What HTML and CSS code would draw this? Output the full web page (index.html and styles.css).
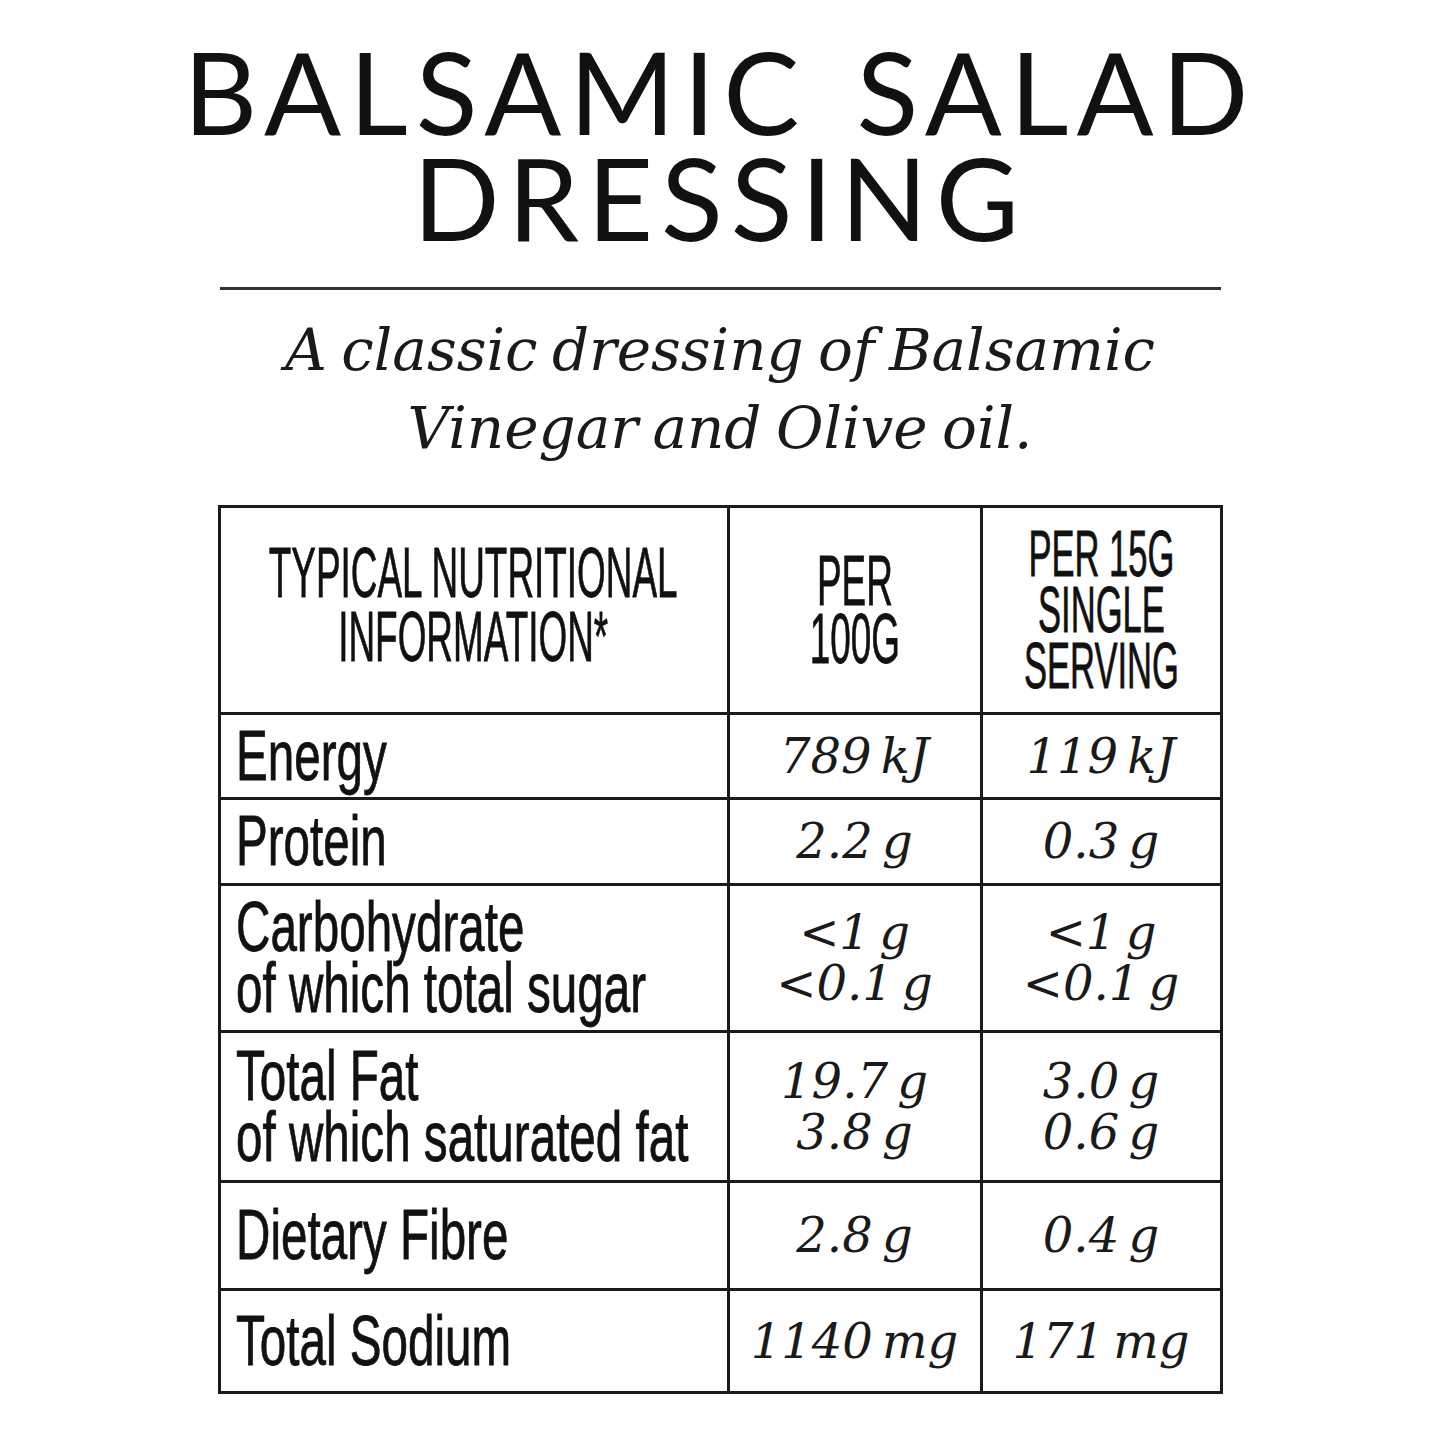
FILE: index.html
```html
<!DOCTYPE html>
<html lang="en">
<head>
<meta charset="utf-8">
<title>Balsamic Salad Dressing</title>
<link rel="stylesheet" href="styles.css">
</head>
<body>
<main class="page">
  <h1 class="title">BALSAMIC SALAD<br>DRESSING</h1>
  <hr class="rule">
  <p class="subtitle">A classic dressing of Balsamic<br>Vinegar and Olive oil.</p>
  <table class="facts">
    <colgroup>
      <col class="c1"><col class="c2"><col class="c3">
    </colgroup>
    <thead>
      <tr class="r-head">
        <th class="h1c"><div class="hc"><span class="cap">TYPICAL NUTRITIONAL<br>INFORMATION*</span></div></th>
        <th class="h2c"><div class="hc"><span class="cap">PER<br>100G</span></div></th>
        <th class="h3c"><div class="hc"><span class="cap">PER 15G<br>SINGLE<br>SERVING</span></div></th>
      </tr>
    </thead>
    <tbody>
      <tr class="r-energy"><td class="lab"><span class="cond">Energy</span></td><td class="val">789 kJ</td><td class="val">119 kJ</td></tr>
      <tr class="r-protein"><td class="lab"><span class="cond">Protein</span></td><td class="val">2.2 g</td><td class="val">0.3 g</td></tr>
      <tr class="r-carb"><td class="lab"><span class="cond">Carbohydrate<br>of which total sugar</span></td><td class="val">&lt;1 g<br>&lt;0.1 g</td><td class="val">&lt;1 g<br>&lt;0.1 g</td></tr>
      <tr class="r-fat"><td class="lab"><span class="cond">Total Fat<br>of which saturated fat</span></td><td class="val">19.7 g<br>3.8 g</td><td class="val">3.0 g<br>0.6 g</td></tr>
      <tr class="r-fibre"><td class="lab"><span class="cond">Dietary Fibre</span></td><td class="val">2.8 g</td><td class="val">0.4 g</td></tr>
      <tr class="r-sodium"><td class="lab"><span class="cond">Total Sodium</span></td><td class="val">1140 mg</td><td class="val">171 mg</td></tr>
    </tbody>
  </table>
</main>
</body>
</html>
```

FILE: styles.css
```css
html, body {
  margin: 0;
  padding: 0;
  background: #ffffff;
  color: #111111;
}

.page {
  width: 1440px;
  display: flex;
  flex-direction: column;
  align-items: center;
  padding-top: 38px;
}

.title {
  margin: 0;
  font-family: "Lato", "Liberation Sans", sans-serif;
  font-weight: 400;
  font-size: 114px;
  line-height: 106px;
  letter-spacing: 8px;
  word-spacing: 12px;
  text-align: center;
  color: #111;
}

.rule {
  width: 1001px;
  height: 3px;
  border: 0;
  background: #333;
  margin: 37px 0 0 0;
}

.subtitle {
  margin: 21px 0 0 0;
  font-family: "DejaVu Serif", "Liberation Serif", serif;
  font-style: italic;
  font-size: 58px;
  line-height: 78px;
  letter-spacing: 0;
  word-spacing: -4px;
  text-align: center;
  color: #1a1a1a;
}

.facts {
  margin-top: 38px;
  width: 1002px;
  border-collapse: collapse;
  table-layout: fixed;
  border: 3px solid #1a1a1a;
}

.c1 { width: 509px; }
.c2 { width: 253px; }
.c3 { width: 240px; }

.facts th,
.facts td {
  border: 3px solid #1a1a1a;
  padding: 0;
  vertical-align: middle;
}

.facts th {
  font-family: "Liberation Sans", "Arial", sans-serif;
  font-weight: 400;
  text-align: center;
  color: #111;
}

.hc {
  display: flex;
  justify-content: center;
  align-items: center;
}

.cap,
.cond {
  display: inline-block;
  white-space: nowrap;
  -webkit-text-stroke: 0.8px #111;
}

.cap {
  flex: none;
  text-align: center;
  transform: scaleX(0.52);
  transform-origin: center center;
}

.cond {
  transform: scaleX(0.68);
  transform-origin: left center;
}

.h1c {
  font-size: 71px;
  line-height: 64px;
  padding-bottom: 10px !important;
}

.h2c {
  font-size: 71px;
  line-height: 58px;
}

.h3c {
  font-size: 64px;
  line-height: 56px;
}

.h3c .cap {
  transform: scaleX(0.54);
}

.r-head { height: 207px; }
.r-energy { height: 85px; }
.r-protein { height: 86px; }
.r-carb { height: 147px; }
.r-fat { height: 150px; }
.r-fibre { height: 108px; }
.r-sodium { height: 103px; }

.lab {
  font-family: "Liberation Sans", "Arial", sans-serif;
  font-size: 70px;
  line-height: 61px;
  text-align: left;
  padding-left: 15px !important;
  color: #111;
}

.val {
  font-family: "DejaVu Serif", "Liberation Serif", serif;
  font-style: italic;
  font-size: 48px;
  line-height: 51px;
  letter-spacing: 0;
  word-spacing: -6px;
  text-align: center;
  color: #1a1a1a;
}
```
